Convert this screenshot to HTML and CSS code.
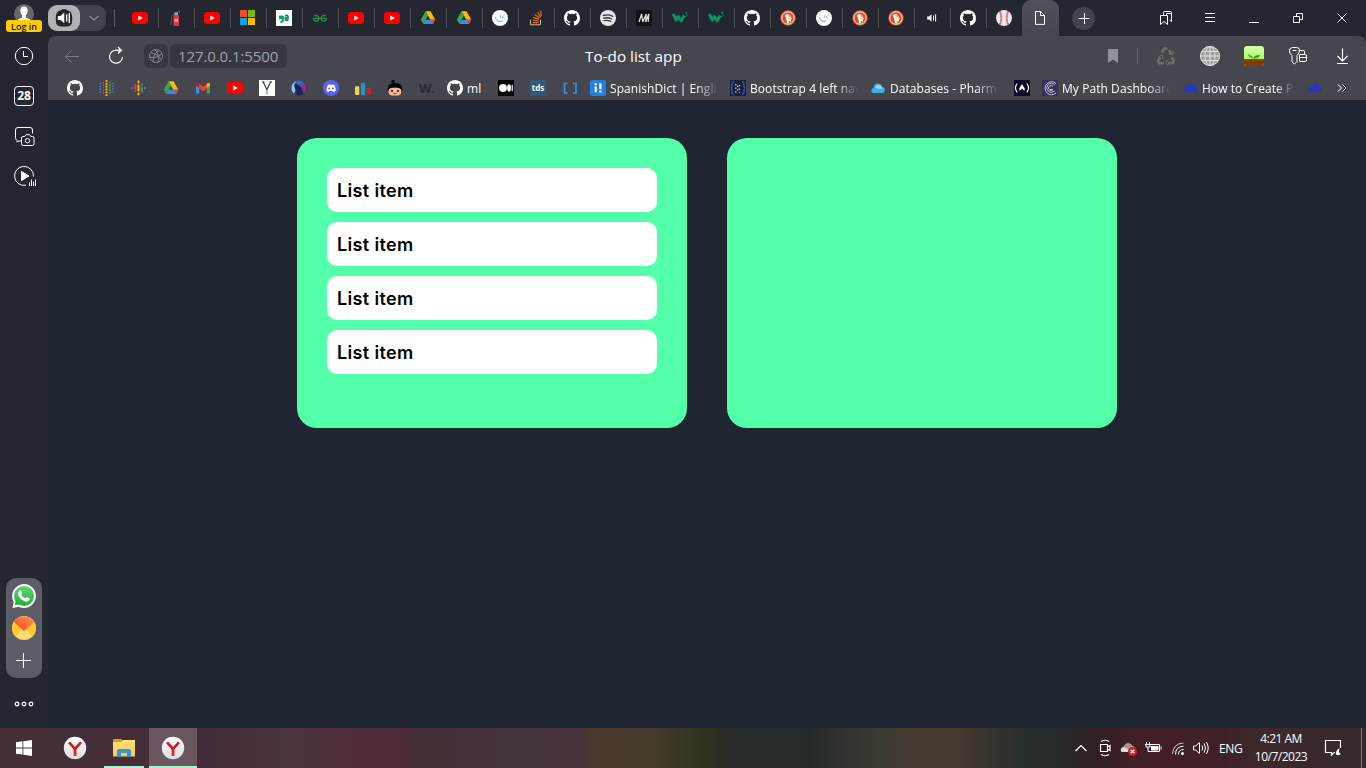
FILE: index.html
```html
<!DOCTYPE html>
<html lang="en">
<head>
<meta charset="utf-8">
<title>To-do list app</title>
<link rel="stylesheet" href="styles.css">
</head>
<body>
<svg class="defs" width="0" height="0">
  <defs>
    <linearGradient id="wa" x1="0" y1="0" x2="0" y2="1"><stop offset="0" stop-color="#5fd46c"/><stop offset="1" stop-color="#20b038"/></linearGradient>
    <linearGradient id="mailred" x1="0" y1="1" x2="1" y2="0"><stop offset="0" stop-color="#ff3b10"/><stop offset="1" stop-color="#ff9a5c"/></linearGradient>
    <linearGradient id="ball" x1="0" y1="0" x2="0" y2="1"><stop offset="0" stop-color="#fff"/><stop offset="1" stop-color="#dcdcdc"/></linearGradient>
    <linearGradient id="folder" x1="0" y1="0" x2="0" y2="1"><stop offset="0" stop-color="#ffe07c"/><stop offset="1" stop-color="#fbc94c"/></linearGradient>
    <linearGradient id="sky" x1="0" y1="0" x2="0" y2="1"><stop offset="0" stop-color="#d4ff9e"/><stop offset="1" stop-color="#a4f060"/></linearGradient>
  </defs>
  <symbol id="youtube" viewBox="0 0 16 16"><rect y="2" width="16" height="12" rx="3" fill="#f00"/><path d="M6.2 5.400 10.800 8l-4.600 2.600z" fill="#fff"/></symbol>
  <symbol id="github" viewBox="0 0 16 16"><path fill="#fff" d="M8 0C3.58 0 0 3.58 0 8c0 3.54 2.29 6.53 5.47 7.59.4.07.55-.17.55-.38 0-.19-.01-.82-.01-1.49-2.01.37-2.53-.49-2.69-.94-.09-.23-.48-.94-.82-1.13-.28-.15-.68-.52-.01-.53.63-.01 1.08.58 1.23.82.72 1.21 1.87.87 2.33.66.07-.52.28-.87.51-1.07-1.78-.2-3.64-.89-3.64-3.95 0-.87.31-1.59.82-2.15-.08-.2-.36-1.02.08-2.12 0 0 .67-.21 2.2.82a7.6 7.6 0 0 1 4 0c1.53-1.04 2.2-.82 2.2-.82.44 1.1.16 1.92.08 2.12.51.56.82 1.27.82 2.15 0 3.07-1.87 3.75-3.65 3.95.29.25.54.73.54 1.48 0 1.07-.01 1.93-.01 2.2 0 .21.15.46.55.38A8.01 8.01 0 0 0 16 8c0-4.42-3.58-8-8-8z"/></symbol>
  <symbol id="drive" viewBox="0 0 16 16"><path fill="#fbbc04" d="M5.500 1.200h5L15.300 9.700h-5z"/><path fill="#34a853" d="M5.500 1.200 8 5.400 3.400 14 .8 9.700z"/><path fill="#4285f4" d="M5.800 9.700h9.500l-2.400 4.300H3.400z"/><path fill="#ea4335" d="m12.900 14 2.400-4.300h-3.800z"/></symbol>
  <symbol id="extinguisher" viewBox="0 0 16 16"><path d="M6.500 3.500 11.500 1v2.400M6.500 3.500 3.500 6.500v5L2.500 15" fill="none" stroke="#4e5b64" stroke-width="1"/><rect x="5.500" y="5" width="5.500" height="11" rx="1.200" fill="#e8344c"/><path d="M6.500 9h3.500v2.800H6.500z" fill="#f6a5ad"/><path d="M6.500 5V2.500h3.500V5z" fill="#99aab5"/></symbol>
  <symbol id="microsoft" viewBox="0 0 16 16"><path fill="#f25022" d="M0 0h7v7H0z"/><path fill="#7fba00" d="M8 0h7v7H8z"/><path fill="#00a4ef" d="M0 8h7v7H0z"/><path fill="#ffb900" d="M8 8h7v7H8z"/></symbol>
  <symbol id="quote" viewBox="0 0 16 16"><path fill="#fff" d="M0 0h16v16H0z"/><path fill="none" stroke="#079b62" stroke-width="1.800" d="M7 6v4q0 2-2.700 2M4 6.300h2v2H4zM9.200 6.500q1.600-2.700 2.700 0V10M9.500 8h2v2h-2z"/></symbol>
  <symbol id="gfg" viewBox="0 0 16 16"><path fill="none" stroke="#2f8d46" stroke-width="1.300" d="M2 5.700q4.700-1 4.700 2.500 0 3-2.500 3T1.600 8.300h12.800q0 2.900-2.600 2.900t-2.500-3Q9.300 4.700 14 5.700"/></symbol>
  <symbol id="swirl" viewBox="0 0 16 16"><circle cx="8" cy="8" r="8" fill="#fcfcfc"/><path fill="none" stroke="#8298c8" d="M3.400 7.200C3.700 10.500 7 12.300 10.500 11"/><path fill="none" stroke="#8fd3df" stroke-width="1" d="M8.500 5v3m2-2v2m2-3.500-1.500 2 1.500 1.800"/></symbol>
  <symbol id="stack" viewBox="0 0 16 16"><path fill="none" stroke="#bcbbbb" d="M2.500 9.800v5h10v-5"/><path fill="none" stroke="#e8710f" stroke-width="1.200" d="M4.500 12.600h6M4.700 10.200l6 .8M5.300 7.400l5.600 2M6.800 4.400l4.800 3.600M9.500 2l3 5M12.600.6l.7 5.800"/></symbol>
  <symbol id="spotify" viewBox="0 0 16 16"><circle cx="8" cy="8" r="8" fill="#e6e6e7"/><path fill="none" stroke="#33363e" stroke-linecap="round" d="M3.200 5.500q5-1.400 9.600.8M3.600 8.200q4.300-1.200 8 .8M4 10.700q3.700-1 6.700.7" stroke-width="1.300"/></symbol>
  <symbol id="monoM" viewBox="0 0 16 16"><path fill="#111116" d="M0 0h16v16H0z"/><path fill="none" stroke="#ddd" stroke-width="1.300" stroke-linejoin="bevel" d="m3 12 2.600-8 1.200 8 3.400-8-.6 8 3.200-8-.6 8"/></symbol>
  <symbol id="w3" viewBox="0 0 16 16"><path fill="none" stroke="#059862" stroke-width="2.900" stroke-linejoin="round" d="m1.300 4.200 3 6L6.200 6.500 9 11l3.200-5.500"/><path fill="none" stroke="#07754f" d="M13 2.500h2.300L14 4.200q1.800.2 1.300 1.800-.8 1-2.300.3"/></symbol>
  <symbol id="duck" viewBox="0 0 16 16"><circle cx="8" cy="8" r="7.700" fill="#de4b28"/><circle cx="8" cy="8" r="6.200" fill="none" stroke="#fff" stroke-width=".9"/><path fill="#fff" d="M5 5q3-2.500 5.500.8l.7 6.500q-2 1.600-4 1L6 8.500z"/><circle cx="9.200" cy="6" r=".7" fill="#2d4f8e"/><path fill="#fc3" d="m8.300 8.300 4-.8-.5 1.700-3.300.5z"/><path fill="#6b4" d="m8.500 11 3 .2.200 1.800-3 .2z"/></symbol>
  <symbol id="speaker" viewBox="0 0 16 16"><path fill="#fff" d="M3.200 6.400h2l2.300-2.100v7.400L5.200 9.600h-2z"/><path stroke="#fff" d="M9.500 5.500v5M11.600 4.300v7.400"/></symbol>
  <symbol id="baseball" viewBox="0 0 16 16"><circle cx="8" cy="8" r="8" fill="#e6eaf0"/><path fill="none" stroke="#d9304c" stroke-width="2" stroke-dasharray="1.200 .8" d="M4 1.500q2.500 6.500 0 13M12 1.500q-2.500 6.500 0 13"/></symbol>
  <symbol id="dots" viewBox="0 0 16 16"><g stroke-linecap="round"><path stroke-dasharray=".1 2.700" stroke="#4285f4" stroke-width="1.500" d="M1.300 3.500v10M14 3.500v10"/><path stroke-dasharray=".1 2.500" stroke="#ea4335" stroke-width="1.600" d="M4.400 2.500v12"/><path stroke-dasharray=".1 2.700" stroke="#fbbc04" stroke-width="2.100" d="M7.500 1v15"/><path stroke-dasharray=".1 2.500" stroke="#34a853" stroke-width="2" d="M10.800 2.500v12"/></g></symbol>
  <symbol id="podcast" viewBox="0 0 16 16"><g stroke-width="1.900" stroke-linecap="round"><path stroke="#4285f4" d="M1.200 8v.3M14 8v.3"/><path stroke="#ea4335" d="M4.500 4.500v4M4.500 11v.3"/><path stroke="#fbbc04" d="M7.500 1.500v1M7.500 5.500v5M7.500 13.500v1"/><path stroke="#34a853" d="M10.800 4.500v.3M10.800 7.500v4"/></g></symbol>
  <symbol id="gmail" viewBox="0 0 16 16"><path fill="#4285f4" d="M1 5.500 4.200 8v5.500H2q-1 0-1-1z"/><path fill="#34a853" d="M15 5.500 11.800 8v5.500H14q1 0 1-1z"/><path fill="#ea4335" d="m3.500 3.300 4.500 3.500 4.500-3.500V8L8 11.200 3.500 8z"/><path fill="#c5221f" d="M1 4.500q.4-2.300 3.200-1V8L1 5.800z"/><path fill="#fbbc04" d="M15 4.500q-.4-2.300-3.200-1V8L15 5.800z"/></symbol>
  <symbol id="vee" viewBox="0 0 16 16"><path fill="#fff" d="M0 0h16v16H0z"/><path fill="none" stroke="#444" stroke-width="1.300" d="m4.200 1.800 3.700 8 3.700-8M3 1.800h2.400M10.700 1.800H13"/><path fill="#59b7d9" d="M7.200 10.700h1.600v3.500H7.200z"/></symbol>
  <symbol id="orb" viewBox="0 0 16 16"><circle cx="8" cy="8" r="7.600" fill="#303783"/><path fill="#8bc9eb" d="M5.500.9A7.600 7.600 0 0 0 3 13.700L4.500 10 3 6z"/><path fill="#1b2450" d="m3.500 3 6 4 3 7q-4 2.500-7 .8z"/><path fill="#9b2b76" d="m10 6 3.700-3q3.700 5.500-1 10.500z"/><path fill="#306bc2" d="M5.500.9Q10-.5 13.500 3L10 7 4.500 3z"/></symbol>
  <symbol id="discord" viewBox="0 0 16 16"><circle cx="8" cy="8" r="8" fill="#5865f2"/><path fill="#fff" d="M3.300 10.800q0-4 1.800-6l2-.6.5.8h1l.5-.8 2 .6q1.800 2 1.800 6-1.500 1-2.600 1.100l-.6-1H6.200l-.6 1q-1.300-.2-2.300-1.100z"/><circle cx="6.200" cy="8.500" r="1" fill="#5865f2"/><circle cx="9.900" cy="8.500" r="1" fill="#5865f2"/></symbol>
  <symbol id="bars" viewBox="0 0 16 16"><rect y="6.300" width="4.300" height="8.700" rx="1" fill="#f7cf51"/><rect x="5.800" y="2.700" width="4.500" height="12.300" rx="1" fill="#2192cc"/><rect x="11.800" y="7.500" width="4.200" height="7.500" rx="1" fill="#c41f2d"/></symbol>
  <symbol id="ninja" viewBox="0 0 16 16"><circle cx="6" cy="1.600" r="1.700" fill="#070707"/><path fill="#070707" d="M1 8q0-5 7-5t7 5l1 1-2 2H1.500L0 8.500z"/><rect x="1.600" y="7.500" width="12.600" height="8" rx="3.700" fill="#f3b89b"/><path fill="#070707" d="M1.500 9Q8 5.500 14.500 9V7H1.500z"/><circle cx="5" cy="11" r="1" fill="#111"/><circle cx="11" cy="11" r="1" fill="#111"/><path stroke="#a33" d="M6.500 13.500h3"/></symbol>
  <symbol id="brackets" viewBox="0 0 16 16"><path fill="none" stroke="#3594e8" stroke-width="1.700" d="M5.500 3.500H2.500v9.500h3M11 3.500h3v9.500h-3"/></symbol>
  <symbol id="medium" viewBox="0 0 16 16"><path d="M0 0h16v16H0z"/><ellipse cx="5" cy="8" rx="3.900" ry="4" fill="#fff"/><ellipse cx="11" cy="8" rx="1.900" ry="3.700" fill="#fff"/><path stroke="#fff" stroke-width="1.200" d="M14.200 4.700v6.600"/></symbol>
  <symbol id="exclaim" viewBox="0 0 16 16"><rect width="16" height="16" rx="2" fill="#247fe0"/><path stroke="#fff" stroke-width="2.200" d="M5.700 6.600v5.600M5.700 3.300v2M10.400 3.300v5.900M10.400 10.400v2"/></symbol>
  <symbol id="braces" viewBox="0 0 16 16"><path fill="#1a2030" d="M0 0h16v16H0z"/><path fill="none" stroke="#2457d6" stroke-width="1.300" d="M4 1.500q-2 0-2 2.500v2Q2 8 .8 8 2 8 2 10v2q0 2.500 2 2.500M12 1.500q2 0 2 2.500v2q0 2 1.200 2Q14 8 14 10v2q0 2.500-2 2.500"/><path stroke="#cfdcff" stroke-width="1.400" stroke-dasharray="1.200 2.400" d="M5.800 4v9M9.500 5v8"/><path stroke="#cfdcff" stroke-width="1.400" stroke-dasharray="1.200 2.400" d="M7.700 5.700V13"/></symbol>
  <symbol id="cloud" viewBox="0 0 16 16"><path fill="#43ade5" d="M4.300 13q-3 0-3-2.500 0-2.300 2.300-2.500Q4 3.500 8 3.500q3.300 0 4.200 3.500 2.800.3 2.800 3-.3 3-3 3z"/><path fill="#92d9fb" d="M5 7.500q.6-2.500 3.500-2.500t3.500 3.500q-3.500 1.500-7-1z"/></symbol>
  <symbol id="fcc" viewBox="0 0 16 16"><path fill="#0a0a23" d="M0 0h16v16H0z"/><path fill="none" stroke="#fff" stroke-width="1.200" d="M3.200 3.500q-3.500 4.500 0 9M12.800 3.500q3.500 4.500 0 9"/><path fill="#fff" d="M8 4 10.800 8.500 10.300 11 8 8.500 5.700 11 5.200 8.500z"/></symbol>
  <symbol id="cc" viewBox="0 0 16 16"><path fill="#3c315c" d="M0 0h16v16H0z"/><g fill="none" stroke="#c5bedb"><path d="M14 3.500A6.500 6.500 0 1 0 14 13"/><path d="M12.800 5A4.500 4.500 0 1 0 12.500 11"/><path d="M11 6.500A2.500 2.500 0 1 0 11 9.500H8"/></g></symbol>
  <symbol id="bluecloud" viewBox="0 0 16 16"><path fill="#2937c4" d="M4 12q-3 0-3-2 0-1.800 2.600-1.800.5-2.700 3-2.700 2-2.700 5-1.200 1.500.8 1.500 2.700 2.700.4 2.700 2.500 0 2.500-2.500 2.500zM0 7h4v.6H0zM0 11h4v.6H0z"/></symbol>
  <symbol id="yandex" viewBox="0 0 24 24"><circle cx="12" cy="12" r="11.200" fill="url(#ball)"/><path stroke="#f52424" stroke-width="2.900" d="M12 12v8"/><path fill="none" stroke="#c9171b" stroke-width="2.500" d="m6 6.300 6 6.500 6-6.500"/></symbol>
</svg>

<div class="screen">
  <aside class="side">
    <div class="profile">
      <svg width="22" height="20" viewBox="0 0 22 20"><circle cx="11" cy="10" r="10" fill="#666769"/><path fill="#fff" d="M11 2.500q4 0 3.700 4.500-.3 3-1.700 4v2.500l4 2V20H5v-4.500l4-2V11Q7.600 10 7.300 7 7 2.500 11 2.500z"/></svg>
      <span class="login">Log in</span>
    </div>
    <div class="cell"><svg class="line" width="24" height="24"><circle cx="12" cy="12" r="8.700"/><path d="M11.500 7v5.500H16"/></svg></div>
    <div class="cell"><span class="calendar">28</span></div>
    <div class="cell"><svg class="line" width="24" height="24"><path d="M9 17H7l-2 1v-1.500q-1.500-1-1.500-3V6q0-2.500 2.500-2.500h12q2.500 0 2.500 2.500v3.500"/><path d="M9.500 14q0-1.500 1.500-1.500h1.700l1.300-1.800h3.500l1.300 1.800h1.700q1.500 0 1.500 1.500v5.500q0 2-1.500 2H11q-1.500 0-1.500-2z"/><circle cx="15.500" cy="16.700" r="2.200"/></svg></div>
    <div class="cell"><svg class="line" width="24" height="24"><path d="M14 21.200A9.500 9.500 0 1 1 21.500 12.500"/><path d="m9.500 7.500 7.500 4.500-7.500 4.500z" fill="#fff"/><path d="M17.500 18.500V22M19.500 15.500V22M21.500 17.500V22M23.500 15.500V22"/></svg></div>
    <div class="spacer"></div>
    <div class="messengers">
      <svg width="24" height="24"><path fill="#fff" d="M12 0a12 12 0 1 1-5.500 22.700L.4 24l1.300-6A12 12 0 0 1 12 0z"/><circle cx="12" cy="12" r="10" fill="url(#wa)"/><path fill="#20b038" d="m2.800 21.300 1-5 4 4z"/><path fill="#fff" d="M7.500 6.500q1-.8 1.800.2l1 2.500-1.100 1.500q1.400 2.600 4 3.600l1.300-1.400 3 1.400q.6.800 0 2-1.300 1.900-4 1.300-5.400-1.500-7.300-6.800-.3-2.700 1.300-4.300z"/></svg>
      <svg width="24" height="24"><circle cx="12" cy="12" r="12" fill="#ffdb73"/><path fill="#ffc730" d="M1.800 6 9.500 13 4 21A12 12 0 0 1 1.800 6zM22.200 6l-7.700 7 5.500 8a12 12 0 0 0 2.200-15z"/><path fill="url(#mailred)" d="M1.800 6a12 12 0 0 1 20.400 0L12 15z"/></svg>
      <svg class="line" width="24" height="24"><path d="M4 12.500h15M11.500 5v15"/></svg>
    </div>
    <div class="more"><svg width="20" height="8" fill="none" stroke="#fff" stroke-width="1.300"><circle cx="3" cy="4" r="1.800"/><circle cx="10" cy="4" r="1.800"/><circle cx="17" cy="4" r="1.800"/></svg></div>
  </aside>

  <div class="browser">
    <header class="tabs">
      <div class="pinned">
        <span class="sound"><svg width="20" height="20"><path fill="#24262f" d="M10 1q2 0 3 1.200 3 .3 4 2.600 1.500 2 1.200 8 .1 5.700-5 5.700H6.800q-5 0-5-5.700-.3-6 1.200-8 1-2.300 4-2.600Q8 1 10 1z"/><path fill="#fff" d="M3.800 8h2.700L10.300 4.500v10.700L6.500 12H3.800z"/><path stroke="#fff" stroke-width="1.300" d="M12.700 6.500v7M15.300 5v10"/></svg></span>
        <svg class="chev" width="12" height="8"><path d="m1.500 2 4.500 4 4.500-4" fill="none" stroke="#8b8c93" stroke-width="1.200"/></svg>
      </div>
      <i class="rule"></i>
      <nav class="strip">
        <span class="tab"><svg><use href="#youtube"/></svg></span>
        <span class="tab"><svg><use href="#extinguisher"/></svg></span>
        <span class="tab"><svg><use href="#youtube"/></svg></span>
        <span class="tab"><svg><use href="#microsoft"/></svg></span>
        <span class="tab"><svg><use href="#quote"/></svg></span>
        <span class="tab"><svg><use href="#gfg"/></svg></span>
        <span class="tab"><svg><use href="#youtube"/></svg></span>
        <span class="tab"><svg><use href="#youtube"/></svg></span>
        <span class="tab"><svg><use href="#drive"/></svg></span>
        <span class="tab"><svg><use href="#drive"/></svg></span>
        <span class="tab"><svg><use href="#swirl"/></svg></span>
        <span class="tab"><svg><use href="#stack"/></svg></span>
        <span class="tab"><svg><use href="#github"/></svg></span>
        <span class="tab"><svg><use href="#spotify"/></svg></span>
        <span class="tab"><svg><use href="#monoM"/></svg></span>
        <span class="tab"><svg><use href="#w3"/></svg></span>
        <span class="tab"><svg><use href="#w3"/></svg></span>
        <span class="tab"><svg><use href="#github"/></svg></span>
        <span class="tab"><svg><use href="#duck"/></svg></span>
        <span class="tab"><svg><use href="#swirl"/></svg></span>
        <span class="tab"><svg><use href="#duck"/></svg></span>
        <span class="tab"><svg><use href="#duck"/></svg></span>
        <span class="tab"><svg><use href="#speaker"/></svg></span>
        <span class="tab"><svg><use href="#github"/></svg></span>
        <span class="tab"><svg><use href="#baseball"/></svg></span>
      </nav>
      <span class="active"><svg class="line" width="12" height="16"><path d="M1.500 1.500h5l4 4v8.900h-9zM6.500 1.500v4h4"/></svg></span>
      <span class="plus"><svg class="line" width="12" height="12"><path d="M.5 6.500h11M6.500 1v11"/></svg></span>
      <div class="controls">
        <span><svg class="line" width="16" height="16"><path d="M2.500 5.500h7v9L6 11.500l-3.500 3zM5.500 5V2.500q0-1 1-1h6q1 0 1 1v9l-2-1.500M8.500 5V3.500h5"/></svg></span>
        <span><svg class="line" width="16" height="16"><path d="M3 3.500h10M3 7.500h10M3 11.500h10"/></svg></span>
        <span><svg class="line" width="16" height="16"><path d="M3 12.500h10"/></svg></span>
        <span><svg class="line" width="16" height="16"><path d="M3.500 6.500h6v6h-6zM6.500 6V3.500h6v6H10"/></svg></span>
        <span><svg class="line" width="16" height="16"><path d="m3.500 3.500 9 9m0-9-9 9"/></svg></span>
      </div>
    </header>

    <div class="toolbar">
      <div class="address">
        <svg class="back" width="16" height="16"><path d="M15 8.500H2M7.500 2.500l-6 6 6 6" fill="none" stroke="#7b7b83"/></svg>
        <svg class="reload line" width="20" height="20"><path stroke-width="1.200" d="M14.500 6A6.500 6.500 0 1 0 16.500 11M9 4h6.500M12 1l3.500 3.500L12 7.500"/></svg>
        <span class="site"><svg width="16" height="16" fill="none" stroke="#85868e"><circle cx="8" cy="8" r="6.500"/><path d="M3 4.500q6 1 10 6M5 13.500Q5 6 11 2.500M7 1.800q5 5 3.500 12.200M1.700 9q7 2 12.300-3.500"/></svg></span>
        <span class="url">127.0.0.1:5500</span>
        <span class="title">To-do list app</span>
        <svg class="mark" width="12" height="16"><path d="M1 1h10v14l-5-3.500L1 15z" fill="#919197"/></svg>
        <i class="rule2"></i>
        <div class="exts">
          <span><svg width="20" height="20" fill="none" stroke="#6d6e6b" stroke-width="2.600"><path d="m6 6.500 2.300-4h3M13 4l2.300 4M15.800 11.500l2 3.500-1.300 2.200H12M8 17.200H3.500L2.200 14.500l2-3.500"/><path stroke-width="1" d="M12.500 8.500h4.700V4.500M2.500 10.500l3.700-1.500 1 4M12.500 13.500 9.500 17l3 2.700"/></svg></span>
          <span><svg width="20" height="20"><circle cx="10" cy="10" r="10" fill="#a0a0a0"/><g fill="none" stroke="#dedede"><circle cx="10" cy="10" r="9.500"/><ellipse cx="10" cy="10" rx="5" ry="9.500"/><path d="M10 0v20M0 10h20M2 5.500h16M2 14.500h16"/></g></svg></span>
          <span><svg width="20" height="20"><rect width="20" height="20" rx="3" fill="url(#sky)"/><path fill="#7b3d05" d="M0 13h20v4q0 3-3 3H3q-3 0-3-3z"/><path stroke="#985910" d="M0 14h20"/><path fill="#38a800" d="M10 13Q9 10.500 4 8q.5 3.800 5.500 4.300Q10 9 16 9q-.5 3-5.300 3.500z"/></svg></span>
          <span><svg class="line" width="20" height="20"><path d="M4 9.500Q1 7.500 1.500 4 2 1.500 4.500 1.500h4q3 0 3 2.500 0 3-2.500 5.500v6l-2.500 2.500L4 16zM4.500 4.500h4M11.500 5.500v-1h4q1 0 1 1V8M11.500 8.500h5.500q1.500 0 1.500 1.500v4q0 1.500-1.500 1.500h-5.500zM12 11.500h6"/></svg></span>
          <span><svg class="line" width="16" height="18"><path stroke-width="1.200" d="M8.500 1.500v12M3.500 9l5 5 5-5M3 16.500h11"/></svg></span>
        </div>
      </div>
      <div class="bookmarks">
        <svg><use href="#github"/></svg>
        <svg><use href="#dots"/></svg>
        <svg><use href="#podcast"/></svg>
        <svg><use href="#drive"/></svg>
        <svg><use href="#gmail"/></svg>
        <svg><use href="#youtube"/></svg>
        <svg><use href="#vee"/></svg>
        <svg><use href="#orb"/></svg>
        <svg><use href="#discord"/></svg>
        <svg><use href="#bars"/></svg>
        <svg><use href="#ninja"/></svg>
        <span class="wdot">W.</span>
        <span class="bm ml"><svg><use href="#github"/></svg><b>ml</b></span>
        <svg><use href="#medium"/></svg>
        <span class="tds">tds</span>
        <svg><use href="#brackets"/></svg>
        <span class="bm"><svg><use href="#exclaim"/></svg><b class="fade">SpanishDict | Englis</b></span>
        <span class="bm"><svg><use href="#braces"/></svg><b class="fade">Bootstrap 4 left nav</b></span>
        <span class="bm"><svg><use href="#cloud"/></svg><b class="fade">Databases - Pharm</b></span>
        <svg><use href="#fcc"/></svg>
        <span class="bm"><svg><use href="#cc"/></svg><b class="fade">My Path Dashboard</b></span>
        <span class="bm how"><svg><use href="#bluecloud"/></svg><b class="fade">How to Create P</b></span>
        <svg class="last"><use href="#bluecloud"/></svg>
        <svg class="line over"><path d="m4 4.500 3.500 3.500L4 11.500M8.500 4.500 12 8l-3.500 3.500"/></svg>
      </div>
    </div>

    <main class="page">
      <section class="card">
        <div class="item">List item</div>
        <div class="item">List item</div>
        <div class="item">List item</div>
        <div class="item">List item</div>
      </section>
      <section class="card"></section>
    </main>
  </div>

  <footer class="taskbar">
    <span class="task"><svg width="16" height="16" fill="#fff"><path d="M0 2.200 6.500 1.300v6.200H0zM7.300 1.200 16 0v7.500H7.300zM0 8.400h6.500v6.200L0 13.700zM7.300 8.400H16V16l-8.700-1.200z"/></svg></span>
    <span class="task y1"><svg width="24" height="24"><use href="#yandex"/></svg></span>
    <span class="task files"><svg width="22" height="20"><path fill="#e19c00" d="M0 1h8.500L10 3v2H0z"/><path fill="url(#folder)" d="M0 4h8.500L10 2h12v16.500H0z"/><path fill="#3794d8" d="M4 19v-6q0-2 2-2h10q2 0 2 2v6h-4v-4H8v4z"/></svg></span>
    <span class="task on"><svg width="24" height="24"><use href="#yandex"/></svg></span>
    <div class="tray">
      <svg class="line" width="24" height="20"><path stroke-width="1.200" d="m6.500 13 5.500-5.500 5.500 5.500"/></svg>
      <svg class="line" width="24" height="20"><path stroke-width="1.200" d="M7.500 6.500h7v7h-7zM14.500 9l2.500-1.500v5L14.500 11M8 3.500q4-2.500 8 0M8 16.500q4 2.500 8 0"/></svg>
      <svg width="24" height="20"><path fill="#999" d="M6 14q-3-.5-2-3 .5-1.700 2.500-2Q8 5 11.500 5q3 .2 4 3 3.500.5 3 5z"/><path fill="#ddd" d="M6 14q-3-.5-2-3 2-3.500 5-1l5 4z"/><circle cx="15.500" cy="13.500" r="4.500" fill="#d71920"/><path stroke="#fff" stroke-width="1.300" d="m13.700 11.700 3.600 3.600m0-3.600-3.600 3.600"/></svg>
      <svg class="line" width="24" height="20"><path d="M10 6.500h8.500v7h-9.500M20 8.500v3M5 6.500v2.500h4V6.500M5.500 4v2M8.500 4v2M4 6.500h6M7 9v4.500h3"/><path fill="#fff" stroke="none" d="M10 8h7.500v4.500H10z"/></svg>
      <svg class="line wifi" width="25" height="20"><path stroke="#cfc8ca" d="M7.500 16Q8 5.500 18.500 5"/><path d="M10.500 16.500Q10.500 8.500 18.500 8.200M13.500 16.500q0-4.800 5-5"/><circle cx="17.500" cy="15.500" r="1.500" fill="#fff" stroke="none"/></svg>
      <svg class="line" width="24" height="20"><path d="M4.500 8h2.200L10.500 4.500v11L6.700 12H4.500zM13 7.500q1.500 2.500 0 5M15.200 5.500q2.600 4.500 0 9M17.400 4q3.600 6 0 12"/></svg>
      <span class="lang">ENG</span>
      <span class="clock"><span>4:21 AM</span><span>10/7/2023</span></span>
      <svg class="line note" width="20" height="20"><path stroke-width="1.200" d="M12 14.500h-1L8.500 17v-2.500h-6v-12h15v7.500"/><path fill="#fff" stroke="none" d="M16.500 10q-4.500 3-3.500 6.500 3 2 5-1-3 .5-1.500-5.500z"/></svg>
      <i class="peek"></i>
    </div>
  </footer>
</div>
</body>
</html>
```

FILE: styles.css
```css
* { box-sizing: border-box; }
body { margin: 0; background: #202631; font-family: "Open Sans", "Noto Sans", sans-serif; color: #fff; }
svg { display: block; flex: none; }
.defs { position: absolute; }
.line { fill: none; stroke: #fff; }
.screen { width: 1366px; height: 768px; display: grid; grid-template: 728px 40px / 48px 1318px; overflow: hidden; }

.side { background: #242730; display: flex; flex-direction: column; align-items: center; }
.profile { height: 36px; padding-top: 4px; display: flex; flex-direction: column; align-items: center; }
.login { width: 36px; height: 12px; margin-top: -4px; border-radius: 3px; background: #fc0; color: #111; font: 600 9px/13px "Open Sans", sans-serif; text-align: center; white-space: nowrap; z-index: 1; }
.cell { height: 40px; display: flex; align-items: center; }
.calendar { width: 20px; height: 20px; border: 1px solid #fff; border-radius: 4px; font: 700 12px/18px "Open Sans", sans-serif; text-align: center; }
.spacer { flex: 1; }
.messengers { width: 36px; height: 100px; border-radius: 10px; background: #5b5c66; padding-top: 6px; display: flex; flex-direction: column; align-items: center; gap: 8px; }
.more { height: 50px; padding-top: 22px; }

.browser { display: flex; flex-direction: column; min-width: 0; background: #242730; }
.tabs { height: 36px; display: flex; align-items: center; }
.pinned { width: 58px; height: 26px; border-radius: 9px; background: #42434c; display: flex; align-items: center; }
.sound { width: 32px; height: 26px; border-radius: 9px; background: #b1b1b5; display: flex; align-items: center; justify-content: center; }
.chev { margin-left: 8px; }
.rule { width: 1px; height: 18px; margin: 0 7px 0 8px; background: #5a5b63; }
.strip { display: flex; }
.tab { width: 36px; height: 20px; border-left: 1px solid #4b4d55; display: flex; align-items: center; padding-left: 9px; }
.tab:first-child { border-color: transparent; }
.tab svg, .bookmarks svg { width: 16px; height: 16px; flex: none; }
.active { width: 37px; height: 36px; padding-right: 2px; border-radius: 9px 9px 0 0; background: linear-gradient(#51515a, #46464f); display: flex; align-items: center; justify-content: center; }
.plus { width: 23px; height: 23px; margin-left: 13px; border-radius: 50%; background: #42434c; display: flex; align-items: center; justify-content: center; }
.controls { display: flex; margin-left: auto; padding-right: 2px; }
.controls span, .exts span { width: 44px; display: flex; align-items: center; justify-content: center; }

.toolbar { height: 64px; background: #46464f; border-radius: 8px 8px 0 0; }
.address { height: 40px; display: flex; align-items: center; }
.back { margin-left: 16px; }
.reload { margin-left: 26px; }
.site { width: 24px; height: 24px; margin-left: 18px; border-radius: 6px; background: #36373f; display: flex; align-items: center; justify-content: center; }
.url { width: 117px; height: 24px; margin-left: 2px; padding-left: 8px; border-radius: 6px; background: #36373f; color: #a1a1a7; font-size: 15px; line-height: 24px; letter-spacing: -.1px; white-space: nowrap; }
.title { width: 110px; margin-left: 298px; font-size: 15.3px; line-height: 24px; white-space: nowrap; }
.mark { margin-left: 412px; }
.rule2 { width: 1px; height: 16px; margin: 0 6px 0 18px; background: #696970; }
.exts { display: flex; }

.bookmarks { height: 24px; padding-left: 19px; display: flex; align-items: center; gap: 16px; font-size: 12px; letter-spacing: .07px; white-space: nowrap; }
.bm { height: 16px; display: flex; gap: 4px; width: 128px; margin-left: -4px; flex: none; }
.bm b { font-weight: 400; line-height: 18px; height: 18px; }
.fade { width: 108px; overflow: hidden; -webkit-mask-image: linear-gradient(90deg, #000 80%, transparent); mask-image: linear-gradient(90deg, #000 80%, transparent); }
.ml { width: 35px; }
.wdot { width: 16px; color: #2c2d31; font: 700 13px/16px "Open Sans", sans-serif; letter-spacing: -.5px; }
.tds { width: 16px; height: 16px; background: #355876; font: 700 8px/15px "Open Sans", sans-serif; text-align: center; }
.how { width: 112px; }
.how .fade { width: 92px; }
.bookmarks .last { margin-left: -4px; }
.over { margin-left: -4px; }

.page { flex: 1; background: #202631; display: flex; gap: 40px; padding: 38px 0 0 249px; align-items: flex-start; }
.card { width: 390px; height: 290px; padding: 30px; border-radius: 20px; background: #53ffa9; display: flex; flex-direction: column; gap: 10px; }
.item { height: 44px; padding: 0 10px; border-radius: 10px; background: #fff; color: #000; font: 600 18px/45px Inter, sans-serif; letter-spacing: .35px; }

.taskbar { grid-column: 1 / 3; display: flex; background: linear-gradient(90deg, #442f38 0, #452d3a 150px, #432c39 210px, #4a343d 290px, #4f2c3b 350px, #4e2b39 400px, #422e38 420px, #433440 530px, #48323a 583px, #4b3830 592px, #443d29 650px, #2f3021 710px, #272c2b 730px, #252b2b 810px, #3b3c32 885px, #46382f 920px, #44382f 960px, #292f2c 1020px, #252c2b 1050px, #331f24 1100px, #421f26 1140px, #401f25 1210px, #3c292c 1260px, #37292b 1366px); }
.task { width: 48px; height: 40px; display: flex; align-items: center; justify-content: center; }
.y1 { margin-left: 3px; }
.files { width: 40px; margin: 0 5px; box-shadow: inset 0 -2px #a5f3ce; }
.on { background: #6b5660; box-shadow: inset 0 -2px #a5f3ce; }
.tray { margin-left: auto; display: flex; align-items: center; font-size: 12px; }
.wifi { margin-right: -1px; }
.lang { width: 29px; margin-left: 6px; font-size: 12px; letter-spacing: -.3px; }
.clock { width: 66px; display: flex; flex-direction: column; text-align: center; line-height: 18px; letter-spacing: -.5px; }
.note { margin-left: 9px; }
.peek { width: 1px; height: 40px; margin: 0 4px 0 18px; background: #81747a; }
```
